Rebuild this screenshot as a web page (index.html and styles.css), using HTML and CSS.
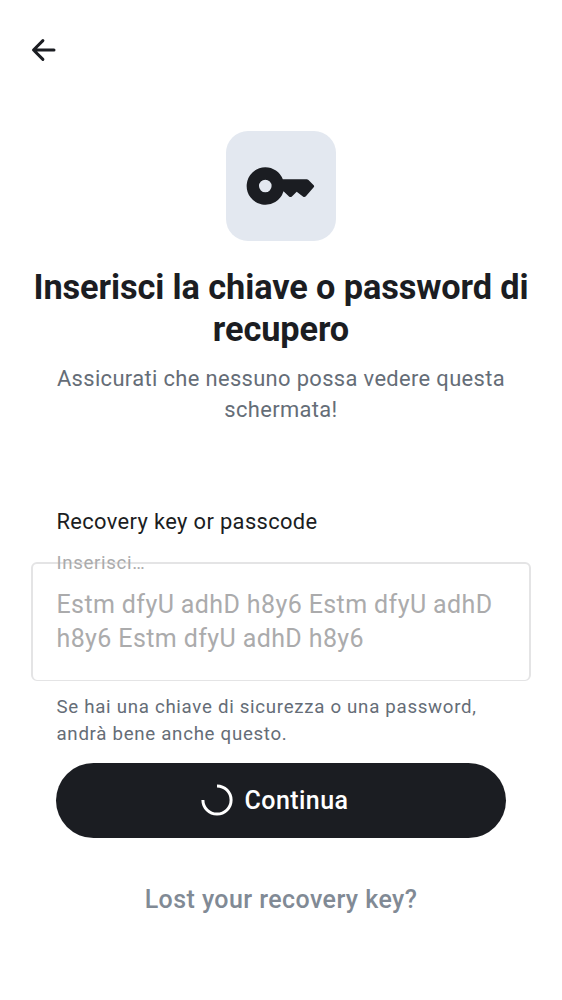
FILE: index.html
```html
<!DOCTYPE html>
<html lang="it">
<head>
<meta charset="utf-8">
<title>Chiave di recupero</title>
<link rel="stylesheet" href="styles.css">
</head>
<body>
<main class="screen">
  <header class="topbar">
    <svg class="back" viewBox="0 0 26 26" aria-label="Indietro"><path d="M24 13H3.7M12.9 3.6L3.5 13l9.4 9.4"/></svg>
  </header>
  <section class="hero">
    <div class="tile">
      <svg class="key" viewBox="0 0 70 40"><path fill-rule="evenodd" d="M19.3 1.2A18.8 18.8 0 0 1 36.8 13.3H60.6Q61.7 13.3 62.5 14.1L67.7 19.2Q68.6 20.2 67.7 21.2L59.9 30.2Q58.5 31.7 56.9 30.4L50.7 25.8L45.9 30.4Q44.5 31.7 43 30.4L37.5 25.3A18.8 18.8 0 1 1 19.3 1.2ZM19.3 13.7A6.3 6.3 0 1 0 19.3 26.3A6.3 6.3 0 1 0 19.3 13.7Z"/></svg>
    </div>
    <h1 class="title">Inserisci la chiave o password di<br>recupero</h1>
    <p class="subtitle">Assicurati che nessuno possa vedere questa<br>schermata!</p>
  </section>
  <section class="form">
    <div class="label">Recovery key or passcode</div>
    <div class="field">
      <span class="floating">Inserisci…</span>
      Estm dfyU adhD h8y6 Estm dfyU adhD<br>h8y6 Estm dfyU adhD h8y6
    </div>
    <p class="hint">Se hai una chiave di sicurezza o una password,<br>andrà bene anche questo.</p>
  </section>
  <div class="actions">
    <button class="primary">
      <svg class="spinner" viewBox="0 0 32 32"><path d="M16 1.9A14.1 14.1 0 1 1 1.9 16"/></svg>
      <span>Continua</span>
    </button>
    <button class="secondary">Lost your recovery key?</button>
  </div>
</main>
</body>
</html>
```
FILE: styles.css
```css
* { box-sizing: border-box; }
body { margin: 0; background: #fff; font-family: Roboto, sans-serif; color: #1b1d22; }
.screen { display: flex; flex-direction: column; width: 562px; height: 1000px; overflow: hidden; }
.topbar { height: 131px; padding: 37px 0 0 30px; }
.back { display: block; width: 26px; height: 26px; fill: none; stroke: #1b1d22; stroke-width: 3; stroke-linejoin: round; stroke-linecap: round; }
.hero { display: flex; flex-direction: column; align-items: center; text-align: center; }
.tile { display: flex; align-items: center; justify-content: center; width: 110px; height: 110px; border-radius: 22px; background: #e3e8f0; }
.key { width: 70px; height: 40px; fill: #1b1d22; }
.title { margin: 25px 0 0; font-size: 34.3px; font-weight: 700; line-height: 42px; letter-spacing: -.1px; white-space: nowrap; }
.subtitle { margin: 13px 0 0; font-size: 21.9px; line-height: 31.2px; letter-spacing: .36px; color: #656d77; white-space: nowrap; }
.form { padding: 80px 31px 0; }
.label { padding-left: 25.4px; font-size: 21.9px; line-height: 34px; letter-spacing: .36px; }
.field { position: relative; height: 119px; margin-top: 23px; padding: 24px 0 0 23.5px; border: 2px solid #e4e4e5; border-bottom-width: 1px; border-radius: 6px; font-size: 25px; line-height: 34px; letter-spacing: .39px; color: #ababac; white-space: nowrap; }
.floating { position: absolute; left: 23.5px; top: -14px; font-size: 18.7px; line-height: 26px; letter-spacing: .66px; }
.hint { margin: 13px 0 0; padding-left: 25.5px; font-size: 18.7px; line-height: 26.6px; letter-spacing: .7px; color: #656d77; white-space: nowrap; }
.actions { display: flex; flex-direction: column; align-items: center; gap: 42.5px; margin-top: 15.2px; }
.primary, .secondary { border: 0; padding: 0; font-family: inherit; font-size: 25px; font-weight: 500; letter-spacing: .42px; }
.primary { display: flex; align-items: center; justify-content: center; gap: 12px; width: 450px; height: 75px; padding-right: 13px; border-radius: 38px; background: #1b1d22; color: #fff; }
.spinner { width: 32px; height: 32px; fill: none; stroke: #fff; stroke-width: 3; }
.secondary { height: 38px; background: none; color: #818a95; }
```
